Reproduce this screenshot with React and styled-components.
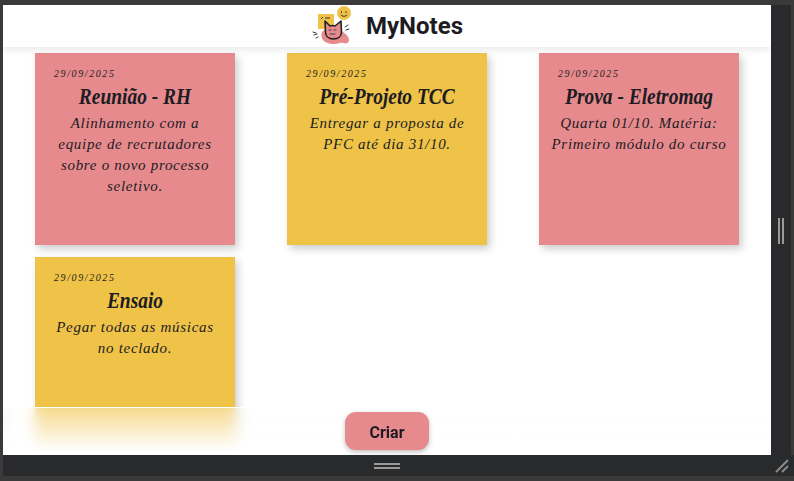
import React from 'react'
import styled, { createGlobalStyle } from 'styled-components'

const notes = [
  { id: 1, date: '29/09/2025', title: 'Reunião - RH', text: 'Alinhamento com a\nequipe de recrutadores\nsobre o novo processo\nseletivo.', color: 'pink' },
  { id: 2, date: '29/09/2025', title: 'Pré-Projeto TCC', text: 'Entregar a proposta de\nPFC até dia 31/10.', color: 'yellow' },
  { id: 3, date: '29/09/2025', title: 'Prova - Eletromag', text: 'Quarta 01/10. Matéria:\nPrimeiro módulo do curso', color: 'pink' },
  { id: 4, date: '29/09/2025', title: 'Ensaio', text: 'Pegar todas as músicas\nno teclado.', color: 'yellow' },
]

const GlobalStyle = createGlobalStyle`
  html, body {
    margin: 0;
    padding: 0;
    height: 100%;
    background: #3a3a3a;
    overflow: hidden;
  }
`

const Logo = () => (
  <svg width="42" height="40" viewBox="0 0 42 40" fill="none">
    <path d="M12 25c4-3 8-3 12-3 3 0 5 2 8 4 3 2 6 5 6 8 0 3-3 4-6 3-3-1-5 1-9 1-5 0-11-2-12-6-1-3-1-5 1-7z" fill="#e78a8e" />
    <rect x="7" y="8" width="16" height="15" fill="#efc347" />
    <path d="M10 13l2-2M14 12h5" stroke="#333" strokeWidth="1" />
    <circle cx="33" cy="7" r="7" fill="#efc347" />
    <path d="M30.5 5.5v1M35 5.5v1M30 9c1 1.800 5 1.800 6 0" stroke="#333" strokeWidth="1" strokeLinecap="round" />
    <path d="M14 15l5 5c1.500-.6 3.500-.6 5 0l6-5 .5 11c0 4-3 7-8 7s-8-3-8-7z" fill="#e78a8e" stroke="#222" strokeWidth="1.600" strokeLinejoin="round" />
    <path d="M18 24h2M23 24h2M19 28h5" stroke="#444" strokeWidth="1" strokeLinecap="round" />
    <path d="M2 26l3 1M3 29l3-1M5 32l2-1M34 21l3-2M35 24l3-1" stroke="#333" strokeWidth="1" strokeLinecap="round" />
  </svg>
)

const App = () => {
  return (
    <>
      <GlobalStyle />
      <Window>
        <Viewport>
          <Header>
            <Logo />
            <Brand>MyNotes</Brand>
          </Header>
          <Board>
            {notes.map((note) => (
              <Note key={note.id} $color={note.color}>
                <NoteDate>{note.date}</NoteDate>
                <NoteTitle>{note.title}</NoteTitle>
                <NoteText>{note.text}</NoteText>
              </Note>
            ))}
          </Board>
          <Footer>
            <CreateButton>Criar</CreateButton>
          </Footer>
        </Viewport>
        <SideHandle>
          <Grip />
          <Grip />
        </SideHandle>
        <BottomHandle>
          <BottomGrip />
          <Corner width="14" height="14" viewBox="0 0 14 14">
            <path d="M1 13L13 1M7 13l6-6" stroke="#8a8a8a" strokeWidth="2" />
          </Corner>
        </BottomHandle>
      </Window>
    </>
  )
}

export default App

const Window = styled.div`
  width: 794px;
  height: 481px;
  box-sizing: border-box;
  padding: 5px 3px 5px 3px;
  display: grid;
  grid-template-columns: 768px 1fr;
  grid-template-rows: 450px 21px;
`
const Viewport = styled.div`
  position: relative;
  background: #fff;
  overflow: hidden;
  display: flex;
  flex-direction: column;
`
const Header = styled.header`
  height: 42px;
  flex-shrink: 0;
  background: #fff;
  box-shadow: 0 2px 8px rgba(0, 0, 0, 0.1);
  display: flex;
  align-items: center;
  justify-content: center;
  gap: 13px;
  position: relative;
  z-index: 1;
`
const Brand = styled.h1`
  margin: 0;
  font: 700 24px/1 Roboto, sans-serif;
  color: #1c1c22;
`
const Board = styled.main`
  display: grid;
  grid-template-columns: repeat(3, 200px);
  grid-auto-rows: 192px;
  column-gap: 52px;
  row-gap: 12px;
  padding: 6px 32px 0;
`
const Note = styled.article`
  background: ${(p) => (p.$color === 'pink' ? '#e78a8e' : '#efc347')};
  box-shadow: 3px 4px 8px rgba(0, 0, 0, 0.2);
  padding-top: 15px;
  display: flex;
  flex-direction: column;
  color: #1c1c22;
  font-family: "Liberation Serif", serif;
  font-style: italic;
`
const NoteDate = styled.span`
  padding-left: 19px;
  font-size: 10px;
  line-height: 12px;
  letter-spacing: 1.6px;
`
const NoteTitle = styled.h2`
  margin: 1px 0 0;
  font-size: 24px;
  line-height: 30px;
  font-weight: 700;
  text-align: center;
  white-space: nowrap;
  transform: scaleX(0.81);
`
const NoteText = styled.p`
  margin: 2px 0 0;
  font-size: 15px;
  line-height: 21px;
  letter-spacing: 0.7px;
  text-align: center;
  white-space: pre-line;
`
const Footer = styled.div`
  position: absolute;
  left: 0;
  right: 0;
  bottom: 0;
  height: 48px;
  border-top: 1px solid #fff;
  background: linear-gradient(to bottom, rgba(255, 255, 255, 0.4), #fff 95%);
  backdrop-filter: blur(7px);
  display: flex;
  align-items: flex-start;
  justify-content: center;
  padding-top: 4px;
  box-sizing: border-box;
`
const CreateButton = styled.button`
  width: 84px;
  height: 38px;
  border: none;
  border-radius: 11px;
  background: #e78a8e;
  color: #1c1c22;
  font: 700 16px/1 Roboto, sans-serif;
  padding-top: 4px;
  box-shadow: 0 2px 5px rgba(0, 0, 0, 0.25);
  cursor: pointer;
`
const SideHandle = styled.div`
  background: #292a2c;
  border-right: 3px solid #3a3a3a;
  display: flex;
  align-items: center;
  justify-content: center;
  gap: 2px;
  margin-right: -3px;
  padding-top: 2px;
`
const Grip = styled.span`
  width: 2px;
  height: 26px;
  background: #9a9a9a;
`
const BottomHandle = styled.div`
  grid-column: 1 / 3;
  position: relative;
  margin-right: -3px;
  padding-right: 23px;
  background: #292a2c;
  display: flex;
  align-items: center;
  justify-content: center;
`
const BottomGrip = styled.span`
  width: 26px;
  height: 2px;
  border-top: 2px solid #9a9a9a;
  border-bottom: 2px solid #9a9a9a;
`
const Corner = styled.svg`
  position: absolute;
  right: 5px;
  bottom: 3px;
`
